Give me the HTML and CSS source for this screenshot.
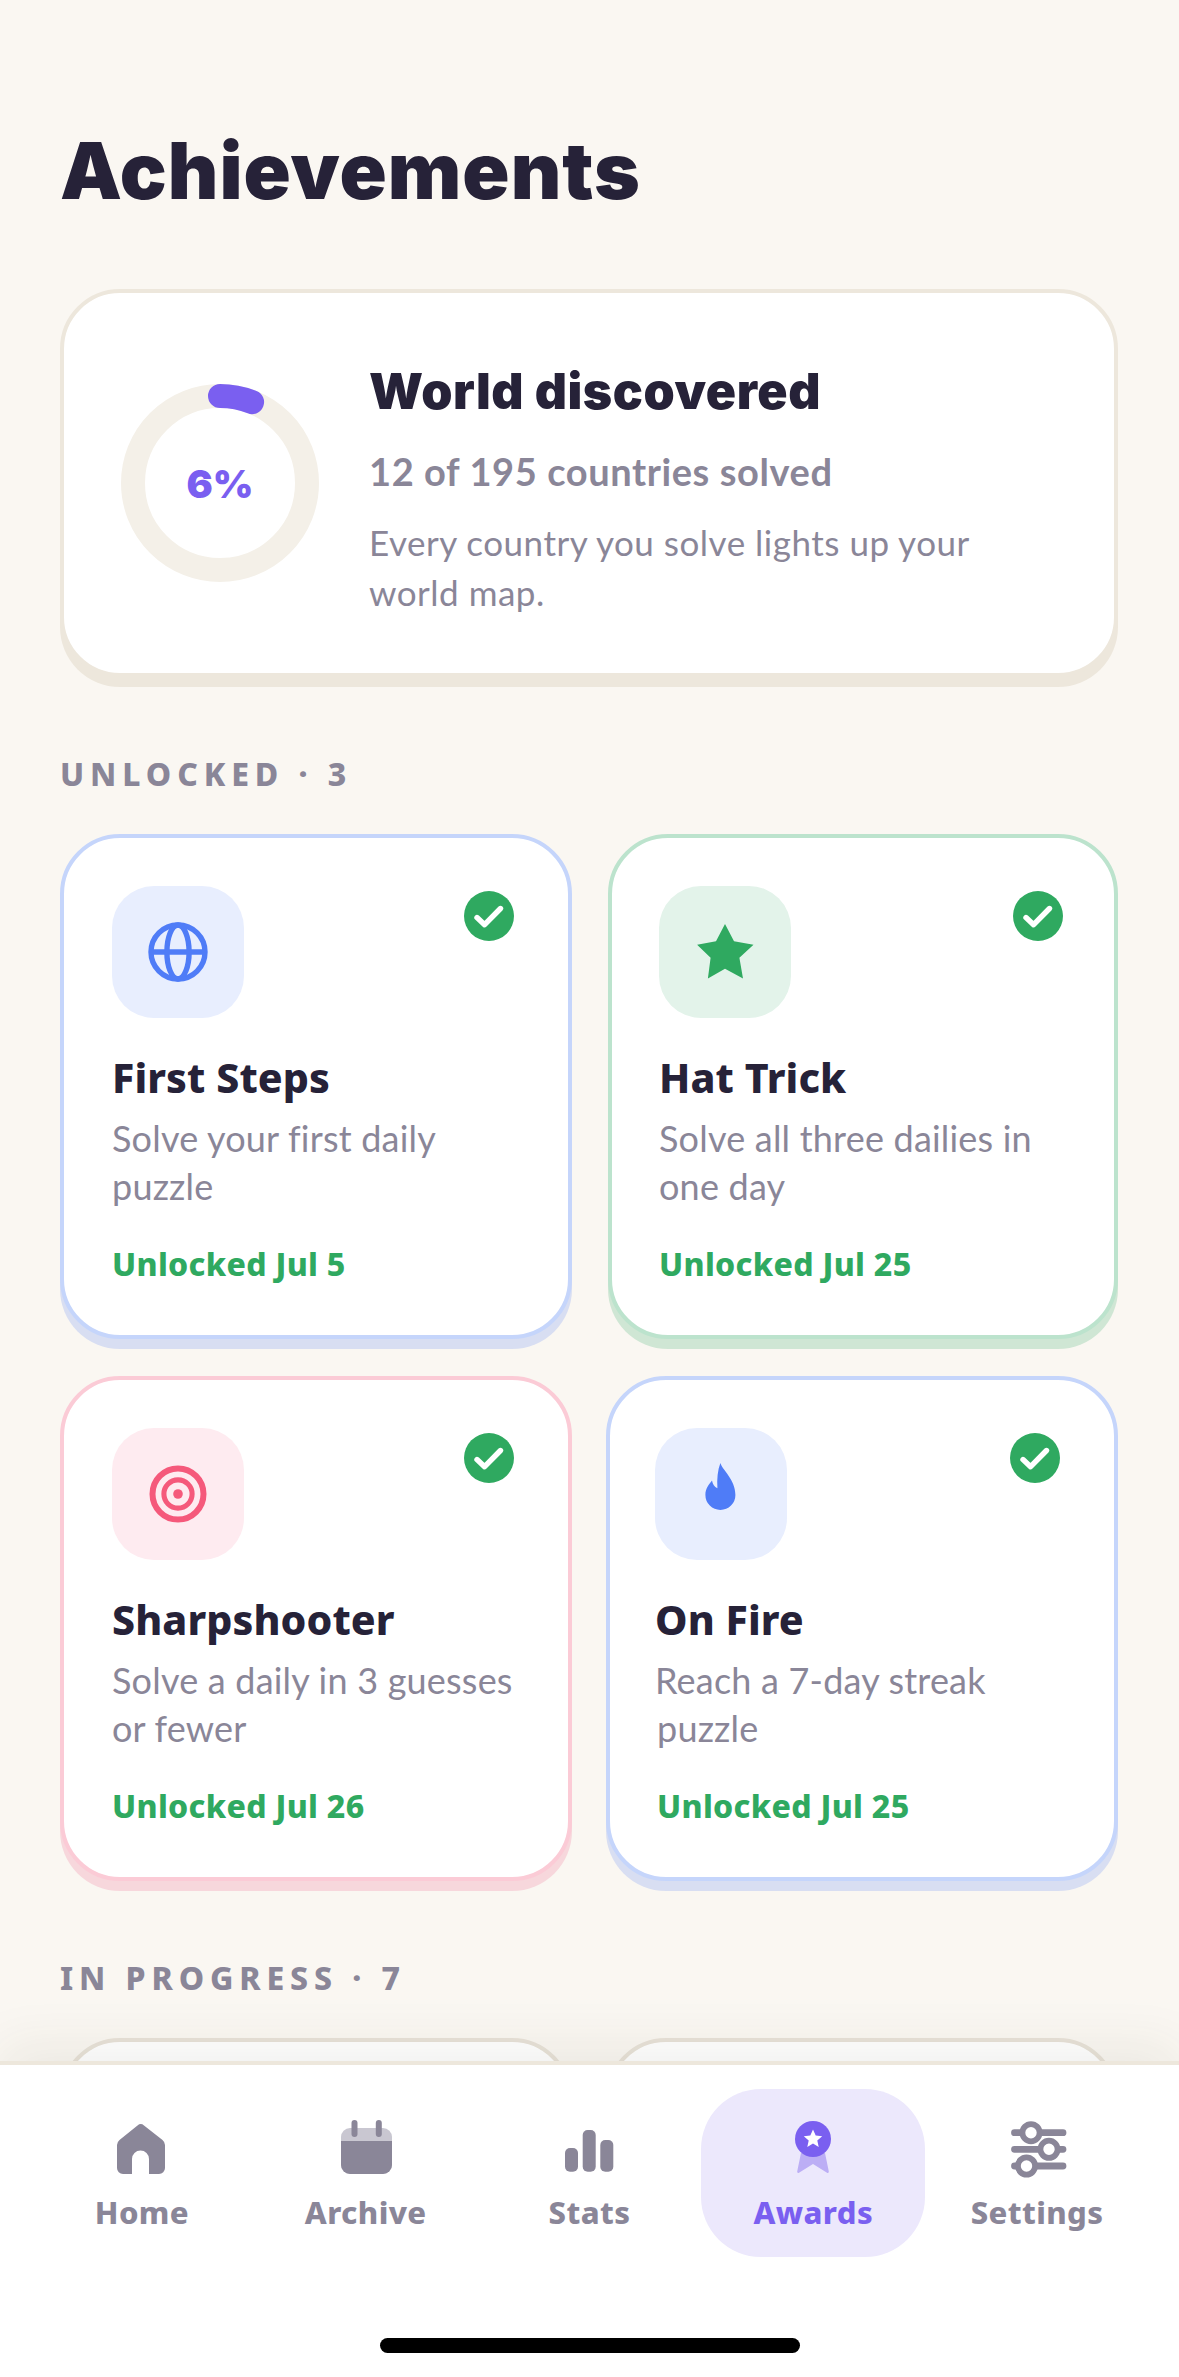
FILE: index.html
```html
<!DOCTYPE html>
<html lang="en">
<head>
  <meta charset="UTF-8" />
  <meta name="viewport" content="width=device-width, initial-scale=1.0" />
  <title>Achievements</title>
  <link rel="stylesheet" href="styles.css">
</head>
<body>
  <main class="content">
    <h1 class="page-title">Achievements</h1>

    <!-- World progress -->
    <section class="hero">
      <div class="ring">
        <svg class="ring-svg" width="198" height="198" viewBox="0 0 198 198">
          <circle cx="99" cy="99" r="87" fill="none" stroke="#f4f0e8" stroke-width="24" />
          <circle cx="99" cy="99" r="87" fill="none" stroke="#7a5ff0" stroke-width="24" stroke-linecap="round" stroke-dasharray="32.8 546.8" transform="rotate(-90 99 99)" />
        </svg>
        <span class="ring-label">6%</span>
      </div>
      <div class="hero-text">
        <h2 class="hero-title">World discovered</h2>
        <p class="hero-count">12 of 195 countries solved</p>
        <p class="hero-note">Every country you solve lights up your world map.</p>
      </div>
    </section>

    <h3 class="section-label label-unlocked">UNLOCKED · 3</h3>
    <div class="grid">
      <article class="card card-blue">
        <div class="card-icon icon-blue">
          <svg width="72" height="72" viewBox="0 0 24 24" fill="none" stroke="#4f7cf7" stroke-width="1.8">
            <circle cx="12" cy="12" r="9" />
            <ellipse cx="12" cy="12" rx="3.7" ry="9" />
            <path d="M3 12h18" />
          </svg>
        </div>
        <svg class="check" width="50" height="50" viewBox="0 0 50 50">
          <circle cx="25" cy="25" r="25" fill="#2fa960" />
          <path d="M13 26.5l7.6 7.2L36.5 17.5" fill="none" stroke="#fff" stroke-width="5.4" stroke-linecap="round" stroke-linejoin="round" />
        </svg>
        <h4 class="card-title">First Steps</h4>
        <p class="card-desc">Solve your first daily puzzle</p>
        <p class="card-date">Unlocked Jul 5</p>
      </article>

      <article class="card card-green card-hat">
        <div class="card-icon icon-green">
          <svg width="72" height="72" viewBox="0 0 24 24">
            <path d="M12 2.7L15 8.4 21.5 9.6 16.8 13.95 18 20.8 12 17.6 6.3 20.8 7.2 13.95 2.7 9.6 9 8.4Z" fill="#2fa960" />
          </svg>
        </div>
        <svg class="check" width="50" height="50" viewBox="0 0 50 50">
          <circle cx="25" cy="25" r="25" fill="#2fa960" />
          <path d="M13 26.5l7.6 7.2L36.5 17.5" fill="none" stroke="#fff" stroke-width="5.4" stroke-linecap="round" stroke-linejoin="round" />
        </svg>
        <h4 class="card-title">Hat Trick</h4>
        <p class="card-desc">Solve all three dailies in one day</p>
        <p class="card-date">Unlocked Jul 25</p>
      </article>

      <article class="card card-pink">
        <div class="card-icon icon-pink">
          <svg width="72" height="72" viewBox="0 0 24 24" fill="none" stroke="#f5597b">
            <circle cx="12" cy="12" r="8.5" stroke-width="2" />
            <circle cx="12" cy="12" r="4.7" stroke-width="1.7" />
            <circle cx="12" cy="12" r="1.6" fill="#f5597b" stroke="none" />
          </svg>
        </div>
        <svg class="check" width="50" height="50" viewBox="0 0 50 50">
          <circle cx="25" cy="25" r="25" fill="#2fa960" />
          <path d="M13 26.5l7.6 7.2L36.5 17.5" fill="none" stroke="#fff" stroke-width="5.4" stroke-linecap="round" stroke-linejoin="round" />
        </svg>
        <h4 class="card-title">Sharpshooter</h4>
        <p class="card-desc">Solve a daily in 3 guesses or fewer</p>
        <p class="card-date">Unlocked Jul 26</p>
      </article>

      <article class="card card-blue card-fire">
        <div class="card-icon icon-blue">
          <svg width="72" height="72" viewBox="0 0 24 24">
            <path d="M11.8 1.7C12.4 4 16.8 7.2 16.8 12.3A5 5 0 0 1 6.8 12.3C6.8 10.2 8 8.7 9 7.5 9.2 8.7 9.8 9.7 10.8 10.1 10.6 7 10.9 4 11.8 1.7Z" fill="#4f7cf7" />
          </svg>
        </div>
        <svg class="check" width="50" height="50" viewBox="0 0 50 50">
          <circle cx="25" cy="25" r="25" fill="#2fa960" />
          <path d="M13 26.5l7.6 7.2L36.5 17.5" fill="none" stroke="#fff" stroke-width="5.4" stroke-linecap="round" stroke-linejoin="round" />
        </svg>
        <h4 class="card-title">On Fire</h4>
        <p class="card-desc">Reach a 7-day streak <span class="nudge">puzzle</span></p>
        <p class="card-date nudge">Unlocked Jul 25</p>
      </article>
    </div>

    <h3 class="section-label label-progress">IN PROGRESS · 7</h3>
    <div class="grid">
      <article class="card card-locked"></article>
      <article class="card card-locked"></article>
    </div>
  </main>

  <!-- Bottom tabs -->
  <nav class="tab-bar">
    <div class="tabs">
      <a class="tab" href="#">
        <svg width="72" height="72" viewBox="0 0 72 72">
          <path d="M31.5 13.5a5 5 0 0 1 6.5 0L56.5 28a7 7 0 0 1 2.5 5V56a6 6 0 0 1-6 6H43V47a8.5 8.5 0 0 0-17 0V62H17a6 6 0 0 1-6-6V33a7 7 0 0 1 2.5-5Z" fill="#8a8698" />
        </svg>
        <span>Home</span>
      </a>
      <a class="tab" href="#">
        <svg width="72" height="72" viewBox="0 0 72 72">
          <rect x="11" y="16" width="51" height="46" rx="9" fill="#c9c7d1" />
          <path d="M11 29H62V53a9 9 0 0 1-9 9H20a9 9 0 0 1-9-9Z" fill="#8a8698" />
          <rect x="21.5" y="8" width="6" height="17" rx="3" fill="#8a8698" />
          <rect x="45.8" y="8" width="6" height="17" rx="3" fill="#8a8698" />
        </svg>
        <span>Archive</span>
      </a>
      <a class="tab" href="#">
        <svg width="72" height="72" viewBox="0 0 72 72" fill="#8a8698">
          <rect x="12" y="36" width="13" height="23.7" rx="5" />
          <rect x="29.7" y="18" width="13" height="41.7" rx="5" />
          <rect x="47.3" y="28" width="13" height="31.7" rx="5" />
        </svg>
        <span>Stats</span>
      </a>
      <a class="tab tab-active" href="#">
        <svg width="72" height="72" viewBox="0 0 72 72">
          <path d="M24 41L20.2 59.5a1.2 1.2 0 0 0 1.8 1.2L36 52l14 8.7a1.2 1.2 0 0 0 1.8-1.2L48 41Z" fill="#bcaef5" />
          <circle cx="36" cy="27" r="18" fill="#7a5ff0" />
          <path d="M36 17.5L38.7 23.6 45.2 24.2 40.3 28.5 41.7 35 36 31.6 30.3 35 31.7 28.5 26.8 24.2 33.3 23.6Z" fill="#fff" />
        </svg>
        <span>Awards</span>
      </a>
      <a class="tab" href="#">
        <svg width="72" height="72" viewBox="0 0 72 72" fill="#fff" stroke="#8a8698">
          <path d="M13.5 20.7H62M13.5 37.3H62M13.5 54H62" stroke-width="6.8" stroke-linecap="round" />
          <circle cx="30" cy="20.7" r="8.6" stroke-width="5.8" />
          <circle cx="48" cy="37.3" r="8.6" stroke-width="5.8" />
          <circle cx="25.5" cy="54" r="8.6" stroke-width="5.8" />
        </svg>
        <span>Settings</span>
      </a>
    </div>
    <div class="home-indicator"></div>
  </nav>
</body>
</html>
```

FILE: styles.css
```css
* {
  box-sizing: border-box;
}
html, body {
  height: 100%;
}
body {
  margin: 0;
  height: 100vh;
  overflow: hidden;
  display: flex;
  flex-direction: column;
  background-color: #faf7f2;
  color: #262238;
  font-family: Lato, "Noto Sans", sans-serif;
}
h1, h2, h3, h4, p {
  margin: 0;
}

.content {
  flex: 1;
  min-height: 0;
  overflow: hidden;
  padding: 129px 61px 0 60px;
}
.page-title {
  font-family: Inter, sans-serif;
  font-size: 78px;
  line-height: 84px;
  font-weight: 900;
  letter-spacing: 1px;
}

/* world card */
.hero {
  display: flex;
  align-items: center;
  gap: 50px;
  height: 388px;
  margin-top: 76px;
  padding: 0 57px;
  background-color: #fff;
  border: 4px solid #ede7dc;
  border-radius: 60px;
  box-shadow: 0 10px 0 #ede7dc;
}
.ring {
  position: relative;
  flex: none;
  width: 198px;
  height: 198px;
}
.ring-svg {
  display: block;
}
.ring-label {
  position: absolute;
  inset: 0;
  display: flex;
  align-items: center;
  justify-content: center;
  color: #7a5ff0;
  font-family: Inter, sans-serif;
  font-size: 39px;
  font-weight: 900;
}
.hero-text {
  max-width: 660px;
  padding-top: 12px;
}
.hero-title {
  font-family: Inter, sans-serif;
  font-size: 50px;
  line-height: 60px;
  font-weight: 900;
  letter-spacing: 0.55px;
}
.hero-count {
  margin-top: 26px;
  color: #8a8698;
  font-size: 38px;
  line-height: 48px;
  font-weight: 700;
  letter-spacing: 0.6px;
}
.hero-note {
  margin-top: 22px;
  color: #8a8698;
  font-size: 35px;
  line-height: 50px;
  letter-spacing: 0.5px;
}

/* section labels */
.section-label {
  color: #8a8698;
  font-family: "Noto Sans", sans-serif;
  font-size: 32px;
  line-height: 40px;
  font-weight: 800;
  letter-spacing: 5.9px;
}
.label-unlocked {
  margin-top: 77px;
}
.label-progress {
  margin-top: 77px;
}

/* achievement cards */
.grid {
  display: grid;
  grid-template-columns: 512px 512px;
  gap: 37px 34px;
  margin-top: 40px;
}
.card {
  position: relative;
  height: 505px;
  padding: 48px;
  background-color: #fff;
  border: 4px solid #c5d5fb;
  border-radius: 60px;
}
.card-blue {
  border-color: #c5d5fb;
  box-shadow: 0 10px 0 #d8def2;
}
.card-green {
  border-color: #bce3cd;
  box-shadow: 0 10px 0 #cfe6d4;
}
.card-pink {
  border-color: #fbcbd6;
  box-shadow: 0 10px 0 #f7d7dc;
}
.card-locked {
  border-color: #e8e2d8;
}
.card-hat {
  margin-left: 2px;
  padding-left: 47px;
}
.card-fire {
  padding-left: 45px;
}
.card-icon {
  display: flex;
  align-items: center;
  justify-content: center;
  width: 132px;
  height: 132px;
  border-radius: 42px;
}
.icon-blue {
  background-color: #e8eefe;
}
.icon-green {
  background-color: #e3f3ea;
}
.icon-pink {
  background-color: #feebf0;
}
.check {
  position: absolute;
  top: 53px;
  right: 54px;
}
.card-hat .check {
  right: 51px;
}
.card-title {
  margin-top: 31px;
  font-family: "Noto Sans", sans-serif;
  font-size: 41px;
  line-height: 56px;
  font-weight: 800;
  letter-spacing: 0.1px;
}
.card-desc {
  margin-top: 9px;
  color: #8a8698;
  font-size: 36px;
  line-height: 48px;
  letter-spacing: 0.2px;
}
.card-date {
  margin-top: 32px;
  color: #2fa960;
  font-family: "Noto Sans", sans-serif;
  font-size: 32px;
  line-height: 44px;
  font-weight: 800;
  letter-spacing: 0.3px;
}
.nudge {
  display: inline-block;
  margin-left: 2px;
}
.card-date.nudge {
  display: block;
}

/* tab bar */
.tab-bar {
  position: relative;
  flex: none;
  height: 316px;
  padding: 24px 30px 0;
  background-color: #fff;
  border-top: 4px solid #ede7dc;
  box-shadow: 0 -16px 50px rgba(60, 50, 30, 0.07);
}
.tabs {
  display: flex;
}
.tab {
  flex: 1;
  display: flex;
  flex-direction: column;
  align-items: center;
  height: 168px;
  padding-top: 23px;
  border-radius: 60px;
  color: #8a8698;
  font-family: "Noto Sans", sans-serif;
  font-size: 31px;
  line-height: 40px;
  font-weight: 800;
  letter-spacing: 0.4px;
  text-decoration: none;
}
.tab span {
  margin-top: 8px;
}
.tab-active {
  background-color: #ece8fc;
  color: #7a5ff0;
}
.home-indicator {
  width: 420px;
  height: 15px;
  margin: 81px auto 0;
  border-radius: 8px;
  background-color: #000;
}
```
